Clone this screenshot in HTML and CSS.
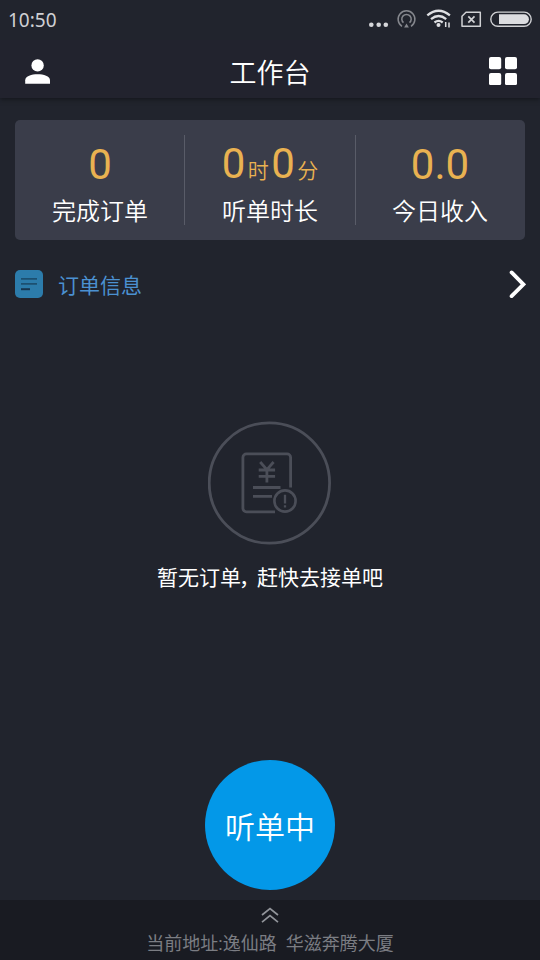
FILE: index.html
```html
<!DOCTYPE html>
<html lang="zh-CN">
<head>
<meta charset="utf-8">
<title>工作台</title>
<link rel="stylesheet" href="styles.css">
</head>
<body>
<div class="app">
  <div class="status">
    <span class="clock">10:50</span>
    <svg class="status-icons" width="180" height="40" viewBox="0 0 180 40" fill="none">
      <g fill="#d6d7da"><circle cx="11.3" cy="24.7" r="2.3"/><circle cx="18.7" cy="24.7" r="2.3"/><circle cx="25.8" cy="24.7" r="2.3"/></g>
      <g stroke="#85878d" stroke-width="1.5"><path d="M42 26.3a8.4 8.4 0 1 1 9 0"/><path d="M43.5 22.7a4.7 4.7 0 1 1 6 0"/></g>
      <path d="M46.5 23.5l2.4 4h-4.8z" fill="#85878d"/>
      <g stroke="#dedfe2" stroke-width="2.3"><path d="M67.3 15.3q11.3-9.2 22.6 0"/><path d="M71 19.1q7.6-6.2 15.2 0"/><path d="M74.5 22.5q4.1-3.2 8.2 0"/></g>
      <circle cx="78.5" cy="25.1" r="2" fill="#dedfe2"/>
      <path d="M85.7 22v5M89 22.4v5" stroke="#dedfe2" stroke-width="1.5"/>
      <path d="M106 12.3h14.3v13.9H102V16.3z" stroke="#d0d1d4" stroke-width="1.5" stroke-linejoin="round"/>
      <path d="M108.3 16.3l6.2 6.4m0-6.4l-6.2 6.4" stroke="#d0d1d4" stroke-width="1.7"/>
      <rect x="130.8" y="12.1" width="40.4" height="14.2" rx="7.1" stroke="#d0d1d4" stroke-width="1.4"/>
      <path d="M139 14.3h25a4.9 4.9 0 0 1 0 9.8h-25z" fill="#dcdde0"/>
    </svg>
  </div>
  <header class="bar">
    <svg class="user" width="26" height="26" viewBox="0 0 26 26" fill="#fff"><circle cx="13.6" cy="6.4" r="6.2"/><path d="M1.2 24.8v-3.5c0-4.3 6.4-6.1 12.4-6.1S26 17 26 21.3v3.5z"/></svg>
    <h1 class="title">工作台</h1>
    <svg class="menu" width="28" height="28" viewBox="0 0 28 28" fill="#fff"><rect width="12.2" height="12.2" rx="2"/><rect x="16" width="12" height="12.2" rx="2"/><rect y="16" width="12.2" height="12.2" rx="2"/><rect x="16" y="16" width="12" height="12.2" rx="2"/></svg>
  </header>
  <main class="main">
    <section class="stats">
      <div class="stat"><div class="value">0</div><div class="label">完成订单</div></div>
      <div class="stat"><div class="value value-time">0<span class="unit">时</span>0<span class="unit">分</span></div><div class="label">听单时长</div></div>
      <div class="stat"><div class="value">0.0</div><div class="label">今日收入</div></div>
    </section>
    <div class="info">
      <svg width="28" height="28" viewBox="0 0 28 28"><rect width="28" height="28" rx="5" fill="#2c7cab"/><path d="M6 8.8h16M6 13.8h16" stroke="#1c5071" stroke-width="1.8"/><path d="M6 19.2h9" stroke="#173650" stroke-width="2"/></svg>
      <span class="info-title">订单信息</span>
      <svg width="17" height="28" viewBox="0 0 17 28" fill="none"><path d="M2.6 2.4L14.4 14.3 2.6 26.2" stroke="#fff" stroke-width="3.8" stroke-linecap="round"/></svg>
    </div>
    <section class="empty">
      <svg width="124" height="124" viewBox="0 0 124 124" fill="none" stroke="#4b4e58" stroke-width="2.8">
        <circle cx="61.4" cy="62" r="60.2"/>
        <path d="M67 90.8H38.4a3.5 3.5 0 0 1-3.5-3.5V36.4a3.5 3.5 0 0 1 3.5-3.5h40.7a3.5 3.5 0 0 1 3.5 3.5v30.2"/>
        <path d="M52.2 41l6.7 7.6 6.7-7.6M58.9 48.6v12.8M50.7 49h16.4M50.7 55.3h16.4"/>
        <path d="M45 66.5h27.5M45 75.3h19"/>
        <circle cx="77" cy="80" r="10.6" stroke-width="2.6"/>
        <path d="M77 73.8v8.6M77 84.2v2.3" stroke-width="2.3"/>
      </svg>
      <p class="empty-text">暂无订单<span class="comma">，</span>赶快去接单吧</p>
    </section>
    <button class="listen">听单中</button>
  </main>
  <footer class="address">
    <svg width="18" height="17" viewBox="0 0 18 17" fill="none" stroke="#91949a" stroke-width="1.7"><path d="M1 8l8-6.5L17 8M1 15.2l8-6.5 8 6.5"/></svg>
    <div class="address-text"><span>当前地址:逸仙路</span><span>华滋奔腾大厦</span></div>
  </footer>
</div>
</body>
</html>
```
FILE: styles.css
```css
* { box-sizing: border-box; }
body {
  margin: 0;
  background: #21242d;
  color: #fff;
  font-family: Roboto, "Noto Sans CJK SC", sans-serif;
}
.app {
  width: 540px;
  height: 960px;
  display: flex;
  flex-direction: column;
  overflow: hidden;
}
.status {
  height: 40px;
  display: flex;
  justify-content: space-between;
  background: #21242d;
}
.clock {
  padding-left: 8px;
  font: 19px/41px "Noto Sans", sans-serif;
  color: #cfd0d4;
}
.bar {
  height: 58px;
  flex: none;
  display: grid;
  grid-template-columns: 100px 1fr 100px;
  background: #22232e;
  box-shadow: 0 1px 5px rgba(10, 12, 16, .65);
  clip-path: inset(0 0 -8px 0);
}
.user { margin: 19px 0 0 24px; }
.menu { margin: 17px 0 0 auto; margin-right: 23px; }
.title {
  margin: 0;
  padding-top: 2px;
  text-align: center;
  font-size: 27px;
  line-height: 64px;
  height: 58px;
  font-weight: 350;
}
.main {
  flex: 1;
  display: flex;
  flex-direction: column;
  padding: 22px 15px 0;
}
.stats {
  display: grid;
  grid-template-columns: repeat(3, 1fr);
  height: 120px;
  padding: 15px 0;
  border-radius: 5px;
  background: #3a3d4a;
}
.stat {
  height: 90px;
  text-align: center;
}
.stat:nth-child(2) {
  border: solid #595c68;
  border-width: 0 1px;
  margin: 0 -1px;
}
.value {
  height: 61px;
  font-size: 42px;
  line-height: 59px;
  color: #e9b251;
}
.value-time {
  display: flex;
  justify-content: center;
  align-items: baseline;
  gap: 2.5px;
  line-height: 57px;
}
.unit {
  font-size: 21px;
  line-height: 1;
  font-weight: 350;
}
.label {
  font-size: 24px;
  line-height: 32px;
  font-weight: 350;
}
.info {
  display: flex;
  align-items: center;
  height: 28px;
  margin-top: 30px;
}
.info-title {
  flex: 1;
  margin-left: 15px;
  padding-top: 3px;
  font-size: 21px;
  line-height: 28px;
  color: #4b91d1;
}
.info svg:last-child { margin-right: -1px; }
.empty {
  display: flex;
  flex-direction: column;
  align-items: center;
  margin-top: 123px;
}
.empty-text {
  display: flex;
  margin: 18px 0 0;
  font-size: 21px;
  line-height: 30px;
}
.comma {
  width: 18px;
  margin-left: -2px;
  font-feature-settings: "halt";
}
.listen {
  width: 130px;
  height: 130px;
  margin: 167px auto 0;
  padding: 5px 0 0;
  border: 0;
  border-radius: 50%;
  background: #0398e8;
  color: #fff;
  font: 350 30px/125px Roboto, "Noto Sans CJK SC", sans-serif;
}
.address {
  height: 60px;
  flex: none;
  display: flex;
  flex-direction: column;
  align-items: center;
  padding-top: 7px;
  background: #191b22;
}
.address-text {
  display: flex;
  gap: 9px;
  margin-top: 6px;
  font-size: 18px;
  line-height: 27px;
  color: #7b7d83;
}
```
